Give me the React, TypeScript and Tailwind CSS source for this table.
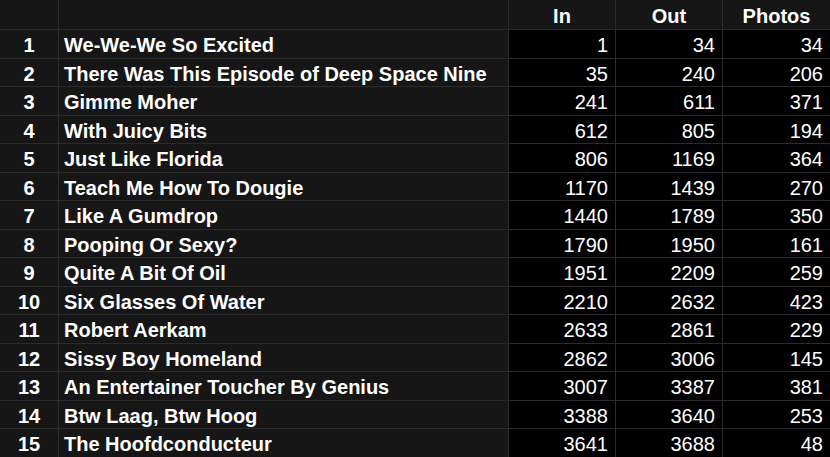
import React from "react";

type Episode = {
  title: string;
  in: number;
  out: number;
  photos: number;
};

const episodes: Episode[] = [
  { title: "We-We-We So Excited", in: 1, out: 34, photos: 34 },
  { title: "There Was This Episode of Deep Space Nine", in: 35, out: 240, photos: 206 },
  { title: "Gimme Moher", in: 241, out: 611, photos: 371 },
  { title: "With Juicy Bits", in: 612, out: 805, photos: 194 },
  { title: "Just Like Florida", in: 806, out: 1169, photos: 364 },
  { title: "Teach Me How To Dougie", in: 1170, out: 1439, photos: 270 },
  { title: "Like A Gumdrop", in: 1440, out: 1789, photos: 350 },
  { title: "Pooping Or Sexy?", in: 1790, out: 1950, photos: 161 },
  { title: "Quite A Bit Of Oil", in: 1951, out: 2209, photos: 259 },
  { title: "Six Glasses Of Water", in: 2210, out: 2632, photos: 423 },
  { title: "Robert Aerkam", in: 2633, out: 2861, photos: 229 },
  { title: "Sissy Boy Homeland", in: 2862, out: 3006, photos: 145 },
  { title: "An Entertainer Toucher By Genius", in: 3007, out: 3387, photos: 381 },
  { title: "Btw Laag, Btw Hoog", in: 3388, out: 3640, photos: 253 },
  { title: "The Hoofdconducteur", in: 3641, out: 3688, photos: 48 },
];

const cols = "grid grid-cols-[59px_450px_107px_107px_107px]";

const App = () => {
  return (
    <div
      className="w-[830px] h-[457px] overflow-hidden bg-[#161616] text-white text-[20px] leading-none"
      style={{ fontFamily: "'Liberation Sans', Arial, Helvetica, sans-serif" }}
    >
      {/* header */}
      <div className={`${cols} h-[30px] font-bold border-b border-[#2b2b2b]`}>
        <div className="border-r border-[#2b2b2b]" />
        <div className="border-r border-[#2b2b2b]" />
        <div className="border-r border-[#2b2b2b] flex items-center justify-center pt-[3px]">In</div>
        <div className="border-r border-[#2b2b2b] flex items-center justify-center pt-[3px]">Out</div>
        <div className="flex items-center justify-center pt-[3px]">Photos</div>
      </div>

      {episodes.map((ep, i) => (
        <div key={i} className={`${cols} h-[28.5px] border-b border-[#2b2b2b]`}>
          <div className="border-r border-[#2b2b2b] flex items-center justify-center font-bold pt-[3px]">
            {i + 1}
          </div>
          <div className="border-r border-[#2b2b2b] flex items-center pl-[5px] font-bold whitespace-nowrap pt-[3px]">
            {ep.title}
          </div>
          <div className="bg-black border-r border-[#2b2b2b] flex items-center justify-end pr-[7px] pt-[3px]">
            {ep.in}
          </div>
          <div className="bg-black border-r border-[#2b2b2b] flex items-center justify-end pr-[7px] pt-[3px]">
            {ep.out}
          </div>
          <div className="bg-black flex items-center justify-end pr-[7px] pt-[3px]">{ep.photos}</div>
        </div>
      ))}
    </div>
  );
};

export default App;
